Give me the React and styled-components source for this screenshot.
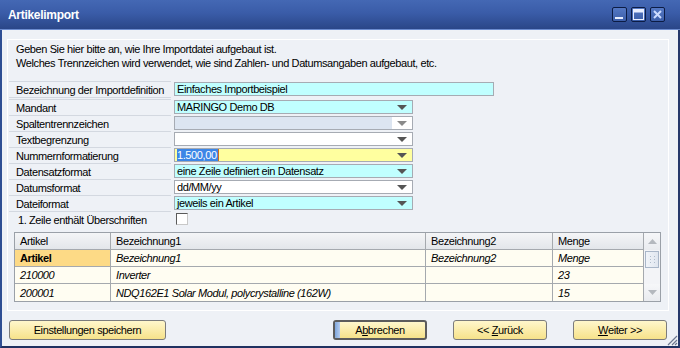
import React from 'react';
import styled, { createGlobalStyle } from 'styled-components';

const GlobalStyle = createGlobalStyle`
  html, body {
    margin: 0;
    padding: 0;
    background: #eef1f6;
  }
  body {
    font-family: "Liberation Sans", Arial, sans-serif;
    font-size: 11px;
    letter-spacing: -0.4px;
    color: #000;
  }
`;

const Window = styled.div`
  position: relative;
  width: 680px;
  height: 348px;
  display: flex;
  flex-direction: column;
  overflow: hidden;
  background: #eef1f6;
`;

const TitleBar = styled.div`
  height: 30px;
  flex: none;
  display: flex;
  align-items: center;
  justify-content: space-between;
  padding: 0 15px 0 8px;
  background: linear-gradient(#4468b4 0%, #3a5ca8 45%, #2a4688 100%);
  border-bottom: 1px solid #6c8cd0;
  box-sizing: border-box;
`;

const Title = styled.span`
  color: #fff;
  font-weight: bold;
  font-size: 12px;
  letter-spacing: -0.3px;
`;

const Controls = styled.div`
  display: flex;
  gap: 4px;
`;

const CtrlBtn = styled.div`
  width: 15px;
  height: 15px;
  box-sizing: border-box;
  border: 1px solid #0c1c44;
  border-radius: 2px;
  background: linear-gradient(#5478c4, #3c5ea8);
  display: flex;
  align-items: center;
  justify-content: center;
`;

const Body = styled.div`
  flex: 1;
  display: flex;
  flex-direction: column;
  border-left: 2px solid #2e4e93;
  border-right: 2px solid #26386a;
  border-bottom: 2px solid #1f3160;
  padding: 9px 9px 0 5px;
`;

const Panel = styled.div`
  border: 1px solid #fff;
  padding: 2px 7px 8px 0;
  display: flex;
  flex-direction: column;
`;

const Intro = styled.div`
  padding-left: 8px;
  line-height: 14px;
`;

const Form = styled.div`
  margin-top: 11px;
  padding-left: 1px;
  display: flex;
  flex-direction: column;
`;

const Row = styled.div`
  display: flex;
  height: ${p => p.$h || 16}px;
  margin-bottom: ${p => p.$mb || 0}px;
`;

const Label = styled.div`
  width: 162px;
  flex: none;
  box-sizing: border-box;
  border-top: 1px solid #d3d8e0;
  border-bottom: ${p => (p.$closed ? '1px solid #d3d8e0' : 'none')};
  padding-left: ${p => p.$pl || 7}px;
  display: flex;
  align-items: center;
`;

const Field = styled.div`
  margin: 1px 0 0 3px;
  width: ${p => p.$w}px;
  height: 14px;
  box-sizing: border-box;
  border: 1px solid #a6abb3;
  background: ${p => p.$bg || '#fff'};
  display: flex;
  align-items: center;
  padding-left: 2px;
  white-space: nowrap;
  overflow: hidden;
`;

const FieldText = styled.span`
  flex: 1;
`;

const Selected = styled.span`
  background: #3d86e6;
  color: #fff;
  border-right: 1px solid #d06a1c;
  padding-right: 1px;
`;

const ArrowBox = styled.div`
  width: 20px;
  height: 100%;
  flex: none;
  display: flex;
  align-items: center;
  justify-content: center;
  background: ${p => (p.$white ? '#fff' : 'transparent')};
`;

const Caret = styled.div`
  width: 0;
  height: 0;
  border-left: 5px solid transparent;
  border-right: 5px solid transparent;
  border-top: 5px solid ${p => (p.$dim ? '#8a8a8a' : '#555')};
`;

const Checkbox = styled.div`
  margin: 2px 0 0 5px;
  width: 12px;
  height: 12px;
  box-sizing: border-box;
  background: #fff;
  border-top: 1px solid #5a5a5a;
  border-left: 1px solid #5a5a5a;
  border-right: 1px solid #c8c8c8;
  border-bottom: 1px solid #c8c8c8;
`;

const Grid = styled.div`
  margin: 5px 0 0 6px;
  display: flex;
  border: 1px solid #9aa0a8;
  background: #fffdf2;
`;

const Table = styled.div`
  display: grid;
  grid-template-columns: 96px 315px 127px 91px;
  grid-auto-rows: 17px;
  flex: none;
`;

const Cell = styled.div`
  box-sizing: border-box;
  padding-left: 5px;
  display: flex;
  align-items: center;
  border-right: 1px solid #a5a9ae;
  border-bottom: ${p => (p.$last ? 'none' : '1px solid #a5a9ae')};
  background: ${p => (p.$head ? 'linear-gradient(#f4f5f7, #e3e6ea)' : p.$hi ? '#fdda86' : 'transparent')};
  font-style: ${p => (p.$head || p.$bold ? 'normal' : 'italic')};
  font-weight: ${p => (p.$bold ? 'bold' : 'normal')};
  white-space: nowrap;
  overflow: hidden;
`;

const Scroll = styled.div`
  flex: 1;
  display: flex;
  flex-direction: column;
  background: #f3f4f7;
`;

const ScrollArrow = styled.div`
  height: 17px;
  flex: none;
  display: flex;
  align-items: center;
  justify-content: center;
  background: linear-gradient(#f6f7f9, #e9ebef);
`;

const Thumb = styled.div`
  margin: 1px 1px 0 1px;
  height: 17px;
  box-sizing: border-box;
  border: 1px solid #a9b6c8;
  background: linear-gradient(90deg, #f1f4f9, #e0e6ef);
  display: flex;
  align-items: center;
  justify-content: center;
`;

const Track = styled.div`
  flex: 1;
`;

const Footer = styled.div`
  display: flex;
  align-items: flex-start;
  padding: 9px 0 0 2px;
  height: 35px;
  box-sizing: border-box;
`;

const Button = styled.div`
  position: relative;
  width: ${p => p.$w || 94}px;
  height: 20px;
  box-sizing: border-box;
  margin-left: ${p => p.$ml || 0}px;
  border: ${p => (p.$default ? '2px solid #5c5c5c' : '1px solid #7c7c7c')};
  border-radius: 3px;
  background: linear-gradient(#fff7cc, #f6e28a);
  display: flex;
  align-items: center;
  justify-content: center;
  white-space: pre;
  overflow: hidden;
  u {
    text-decoration: underline;
  }
`;

const FocusStrip = styled.span`
  position: absolute;
  left: 0;
  top: 0;
  bottom: 0;
  width: 5px;
  background: linear-gradient(90deg, #7ea6dc, #b6cdee);
`;

const Grip = styled.svg`
  position: absolute;
  right: 2px;
  bottom: 2px;
`;

const rows = [
  { label: 'Mandant', value: 'MARINGO Demo DB', bg: '#c0ffff' },
  { label: 'Spaltentrennzeichen', value: '', bg: '#dce5f1', disabled: true },
  { label: 'Textbegrenzung', value: '', bg: '#fff' },
  { label: 'Nummernformatierung', value: '1.500,00', bg: '#ffff9f', selected: true },
  { label: 'Datensatzformat', value: 'eine Zeile definiert ein Datensatz', bg: '#c0ffff' },
  { label: 'Datumsformat', value: 'dd/MM/yy', bg: '#fff' },
  { label: 'Dateiformat', value: 'jeweils ein Artikel', bg: '#c0ffff' },
];

const data = [
  ['210000', 'Inverter', '', '23'],
  ['200001', 'NDQ162E1 Solar Modul, polycrystalline (162W)', '', '15'],
];

export default function App() {
  return (
    <Window>
      <GlobalStyle />
      <TitleBar>
        <Title>Artikelimport</Title>
        <Controls>
          <CtrlBtn>
            <svg width="13" height="13" viewBox="0 0 13 13">
              <rect x="2" y="9" width="8" height="2" fill="#e8eeff" />
            </svg>
          </CtrlBtn>
          <CtrlBtn>
            <svg width="13" height="13" viewBox="0 0 13 13">
              <rect x="1.5" y="1.5" width="10" height="10" fill="none" stroke="#e8eeff" />
              <rect x="1.5" y="1.5" width="10" height="3" fill="#e8eeff" />
            </svg>
          </CtrlBtn>
          <CtrlBtn>
            <svg width="13" height="13" viewBox="0 0 13 13">
              <path d="M3 3 L10 10 M10 3 L3 10" stroke="#cddcff" strokeWidth="2" />
            </svg>
          </CtrlBtn>
        </Controls>
      </TitleBar>

      <Body>
        <Panel>
          <Intro>
            Geben Sie hier bitte an, wie Ihre Importdatei aufgebaut ist.
            <br />
            Welches Trennzeichen wird verwendet, wie sind Zahlen- und Datumsangaben aufgebaut, etc.
          </Intro>

          <Form>
            <Row $h={17} $mb={1}>
              <Label $closed>Bezeichnung der Importdefinition</Label>
              <Field $w={320} $bg="#c0ffff">
                <FieldText>Einfaches Importbeispiel</FieldText>
              </Field>
            </Row>
            {rows.map(r => (
              <Row key={r.label}>
                <Label>{r.label}</Label>
                <Field $w={239} $bg={r.bg}>
                  <FieldText>{r.selected ? <Selected>{r.value}</Selected> : r.value}</FieldText>
                  <ArrowBox $white={r.disabled}>
                    <Caret $dim={r.disabled} />
                  </ArrowBox>
                </Field>
              </Row>
            ))}
            <Row>
              <Label $pl={9}>1. Zeile enthält Überschriften</Label>
              <Checkbox />
            </Row>
          </Form>

          <Grid>
            <Table>
              <Cell $head>Artikel</Cell>
              <Cell $head>Bezeichnung1</Cell>
              <Cell $head>Bezeichnung2</Cell>
              <Cell $head>Menge</Cell>
              <Cell $hi $bold>Artikel</Cell>
              <Cell>Bezeichnung1</Cell>
              <Cell>Bezeichnung2</Cell>
              <Cell>Menge</Cell>
              {data.map((d, i) =>
                d.map((v, j) => (
                  <Cell key={`${i}-${j}`} $last={i === data.length - 1}>
                    {v}
                  </Cell>
                ))
              )}
            </Table>
            <Scroll>
              <ScrollArrow>
                <svg width="9" height="5" viewBox="0 0 9 5">
                  <path d="M0 5 L4.5 0 L9 5 Z" fill="#b4b8be" />
                </svg>
              </ScrollArrow>
              <Thumb>
                <svg width="7" height="9" viewBox="0 0 7 9">
                  {[0, 3, 6].map(y =>
                    [0, 4].map(x => <rect key={`${x}${y}`} x={x + 1} y={y + 1} width="1" height="1" fill="#b0bccc" />)
                  )}
                </svg>
              </Thumb>
              <Track />
              <ScrollArrow>
                <svg width="9" height="5" viewBox="0 0 9 5">
                  <path d="M0 0 L4.5 5 L9 0 Z" fill="#b4b8be" />
                </svg>
              </ScrollArrow>
            </Scroll>
          </Grid>
        </Panel>

        <Footer>
          <Button $w={157}>Einstellungen speichern</Button>
          <Button $default $ml={167}>
            <FocusStrip />
            A<u>b</u>brechen
          </Button>
          <Button $ml={26}>
            {'<< '}<u>Z</u>urück
          </Button>
          <Button $ml={26}>
            <u>W</u>{'eiter >>'}
          </Button>
        </Footer>
      </Body>

      <Grip width="12" height="12" viewBox="0 0 12 12">
        <path d="M11 2 L2 11 M11 6 L6 11 M11 9 L9 11" stroke="#6d7890" strokeWidth="1.2" />
      </Grip>
    </Window>
  );
}
